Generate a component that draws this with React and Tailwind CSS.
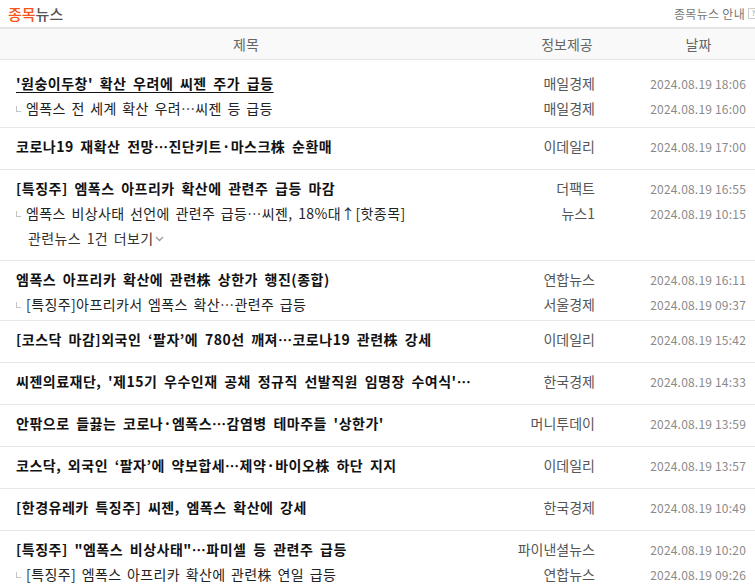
import React from "react";

const news = [
  {
    pt: "pt-[11px]",
    pb: "pb-[6px]",
    lines: [
      { t: "'원숭이두창' 확산 우려에 씨젠 주가 급등", src: "매일경제", date: "2024.08.19 18:06", main: true, hover: true },
      { t: "엠폭스 전 세계 확산 우려…씨젠 등 급등", src: "매일경제", date: "2024.08.19 16:00" },
    ],
  },
  {
    lines: [{ t: "코로나19 재확산 전망…진단키트·마스크株 순환매", src: "이데일리", date: "2024.08.19 17:00", main: true }],
  },
  {
    pb: "pb-[9px]",
    more: "관련뉴스 1건 더보기",
    lines: [
      { t: "[특징주] 엠폭스 아프리카 확산에 관련주 급등 마감", src: "더팩트", date: "2024.08.19 16:55", main: true },
      { t: "엠폭스 비상사태 선언에 관련주 급등…씨젠, 18%대↑[핫종목]", src: "뉴스1", date: "2024.08.19 10:15" },
    ],
  },
  {
    pb: "pb-[3px]",
    lines: [
      { t: "엠폭스 아프리카 확산에 관련株 상한가 행진(종합)", src: "연합뉴스", date: "2024.08.19 16:11", main: true },
      { t: "[특징주]아프리카서 엠폭스 확산…관련주 급등", src: "서울경제", date: "2024.08.19 09:37" },
    ],
  },
  {
    lines: [{ t: "[코스닥 마감]외국인 ‘팔자’에 780선 깨져…코로나19 관련株 강세", src: "이데일리", date: "2024.08.19 15:42", main: true }],
  },
  {
    lines: [{ t: "씨젠의료재단, '제15기 우수인재 공채 정규직 선발직원 임명장 수여식'…", src: "한국경제", date: "2024.08.19 14:33", main: true }],
  },
  {
    lines: [{ t: "안팎으로 들끓는 코로나·엠폭스…감염병 테마주들 '상한가'", src: "머니투데이", date: "2024.08.19 13:59", main: true }],
  },
  {
    lines: [{ t: "코스닥, 외국인 ‘팔자’에 약보합세…제약·바이오株 하단 지지", src: "이데일리", date: "2024.08.19 13:57", main: true }],
  },
  {
    lines: [{ t: "[한경유레카 특징주] 씨젠, 엠폭스 확산에 강세", src: "한국경제", date: "2024.08.19 10:49", main: true }],
  },
  {
    lines: [
      { t: "[특징주] \"엠폭스 비상사태\"…파미셀 등 관련주 급등", src: "파이낸셜뉴스", date: "2024.08.19 10:20", main: true },
      { t: "[특징주] 엠폭스 아프리카 확산에 관련株 연일 급등", src: "연합뉴스", date: "2024.08.19 09:26" },
    ],
  },
];

const Line = ({ item }) => (
  <div className="flex h-[25px] items-center">
    <div className="w-[492px] min-w-0 pl-[16px] pr-[14px]">
      {item.main ? (
        <a
          href="#"
          className={
            "block truncate text-[14px] font-bold tracking-[0.5px] text-[#111] [word-spacing:3px] " +
            (item.hover ? "underline underline-offset-[3px]" : "no-underline")
          }
        >
          {item.t}
        </a>
      ) : (
        <div className="flex items-center truncate text-[14px] tracking-[0.4px] text-[#222] [word-spacing:2px]">
          <span className="mr-[5px] mt-[1px] inline-block h-[6px] w-[5px] shrink-0 border-b border-l border-[#c4c4c4]" />
          <span className="truncate">{item.t}</span>
        </div>
      )}
    </div>
    <div className="w-[103px] text-right text-[14px] text-[#555]">{item.src}</div>
    <div className="flex-1 pr-[9px] text-right text-[12px] tracking-[0.2px] text-[#8a8a8a]">
      {item.date}
    </div>
  </div>
);

export default function App() {
  return (
    <div className="w-[755px] overflow-hidden bg-white font-['Noto_Sans_CJK_KR',sans-serif]">
      {/* TOP BAR */}
      <div className="flex h-[27px] items-center justify-between pl-[8px]">
        <h2 className="text-[15px] font-medium leading-none">
          <span className="text-[#f5561f]">종목</span>
          <span className="text-[#555]">뉴스</span>
        </h2>
        <div className="-mr-[4px] flex items-center gap-[3px] text-[12px] tracking-[0.3px] text-[#777]">
          <span>종목뉴스 안내</span>
          <span className="flex h-[11px] w-[11px] items-center justify-center border border-[#ccc] text-[7px] leading-none text-[#999]">
            ?
          </span>
        </div>
      </div>

      {/* HEADER */}
      <div className="flex h-[33px] items-center border-b border-t-2 border-[#e4e4e4] bg-[#f9f9f9] text-[14px] text-[#666]">
        <div className="w-[492px] text-center">제목</div>
        <div className="w-[150px] text-center">정보제공</div>
        <div className="flex-1 text-center">날짜</div>
      </div>

      {/* ROWS */}
      {news.map((row, i) => (
        <div
          key={i}
          className={
            "border-b border-[#e8e8e8] " + (row.pt || "pt-[6px]") + " " + (row.pb || "pb-[10px]")
          }
        >
          {row.lines.map((item, j) => (
            <Line key={j} item={item} />
          ))}
          {row.more && (
            <div className="flex h-[25px] items-center pl-[28px] text-[14px] tracking-[0.4px] text-[#333] [word-spacing:2px]">
              <span>{row.more}</span>
              <svg width="9" height="6" viewBox="0 0 9 6" className="ml-[2px] mt-[1px]">
                <polyline points="1,1 4.5,4.5 8,1" fill="none" stroke="#999" strokeWidth="1.3" />
              </svg>
            </div>
          )}
        </div>
      ))}
    </div>
  );
}
